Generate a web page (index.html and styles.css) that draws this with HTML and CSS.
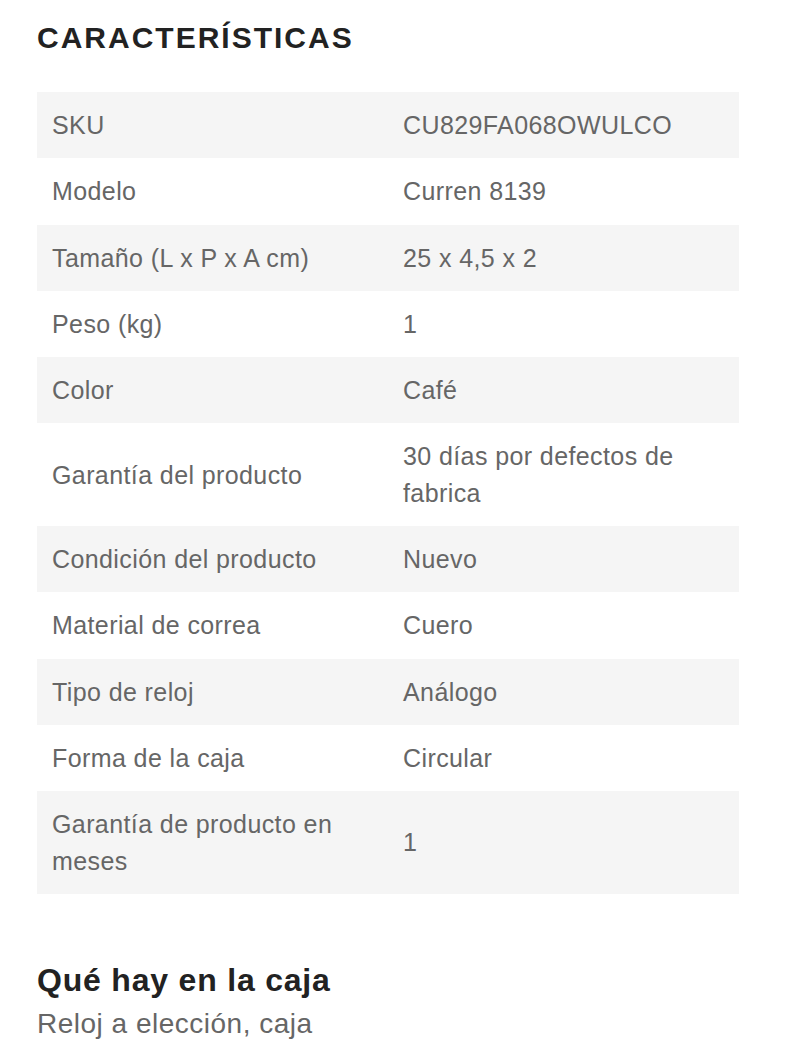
FILE: index.html
```html
<!DOCTYPE html>
<html lang="es">
<head>
    <meta charset="UTF-8">
    <meta name="viewport" content="width=device-width, initial-scale=1.0">
    <title>Características</title>
    <link rel="stylesheet" href="styles.css">
</head>
<body>
    <main class="product-info">
        <h2 class="section-title">CARACTERÍSTICAS</h2>
        <table class="specs">
            <tbody>
                <tr><td>SKU</td><td>CU829FA068OWULCO</td></tr>
                <tr><td>Modelo</td><td>Curren 8139</td></tr>
                <tr><td>Tamaño (L x P x A cm)</td><td>25 x 4,5 x 2</td></tr>
                <tr><td>Peso (kg)</td><td>1</td></tr>
                <tr><td>Color</td><td>Café</td></tr>
                <tr><td>Garantía del producto</td><td>30 días por defectos de fabrica</td></tr>
                <tr><td>Condición del producto</td><td>Nuevo</td></tr>
                <tr><td>Material de correa</td><td>Cuero</td></tr>
                <tr><td>Tipo de reloj</td><td>Análogo</td></tr>
                <tr><td>Forma de la caja</td><td>Circular</td></tr>
                <tr><td>Garantía de producto en meses</td><td>1</td></tr>
            </tbody>
        </table>

        <h3 class="box-title">Qué hay en la caja</h3>
        <p class="box-text">Reloj a elección, caja</p>
    </main>
</body>
</html>
```

FILE: styles.css
```css
body {
    font-family: "Liberation Sans", Arial, sans-serif;
    background-color: #fff;
    margin: 0;
    padding: 0;
    color: #666;
}

.product-info {
    width: 702px;
    margin-left: 37px;
}

.section-title {
    margin: 20px 0 36px;
    font-size: 30px;
    line-height: 36px;
    font-weight: bold;
    letter-spacing: 2px;
    color: #222;
}

.specs {
    width: 100%;
    border-collapse: collapse;
    table-layout: fixed;
}

.specs td {
    width: 50%;
    padding: 15px;
    font-size: 25px;
    line-height: 36.3px;
    letter-spacing: 0.4px;
    vertical-align: middle;
    color: #666;
}

.specs tr:nth-child(odd) {
    background-color: #f5f5f5;
}

.box-title {
    margin: 67px 0 0;
    font-size: 32px;
    line-height: 38px;
    font-weight: bold;
    letter-spacing: 0.8px;
    color: #222;
}

.box-text {
    margin: 7px 0 0;
    font-size: 28px;
    line-height: 36px;
    letter-spacing: 0.5px;
    color: #666;
}
```
